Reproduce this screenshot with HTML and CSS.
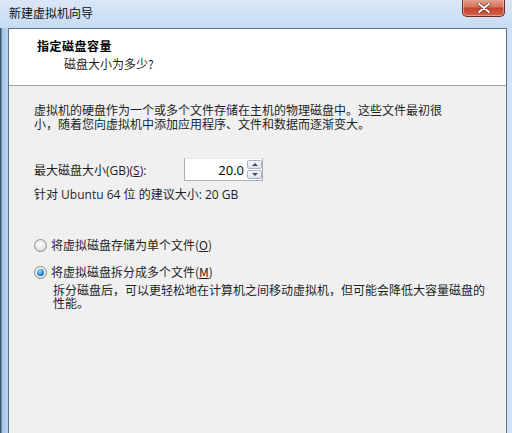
FILE: index.html
```html
<!DOCTYPE html>
<html lang="zh-CN">
<head>
    <meta charset="UTF-8">
    <meta name="viewport" content="width=device-width, initial-scale=1.0">
    <title>新建虚拟机向导</title>
    <link rel="stylesheet" href="styles.css">
</head>
<body>
    <div class="window">
        <div class="titlebar">
            <span class="title">新建虚拟机向导</span>
            <button class="close" aria-label="关闭">
                <svg width="14" height="10" viewBox="0 0 14 10">
                    <path d="M2 1 L12 9 M12 1 L2 9" stroke="#5a2a22" stroke-width="3.4" stroke-linecap="round"/>
                    <path d="M2 1 L12 9 M12 1 L2 9" stroke="#ffffff" stroke-width="2" stroke-linecap="round"/>
                </svg>
            </button>
        </div>
        <div class="client">
            <div class="header">
                <div class="header-title">指定磁盘容量</div>
                <div class="header-sub">磁盘大小为多少?</div>
            </div>
            <div class="content">
                <p class="intro">虚拟机的硬盘作为一个或多个文件存储在主机的物理磁盘中。这些文件最初很<br>小，随着您向虚拟机中添加应用程序、文件和数据而逐渐变大。</p>

                <div class="size-row">
                    <label class="size-label">最大磁盘大小(GB)(<u>S</u>):</label>
                    <div class="spin">
                        <input class="spin-value" type="text" value="20.0">
                        <div class="spin-buttons">
                            <span class="spin-btn"><i class="arrow up"></i></span>
                            <span class="spin-btn"><i class="arrow down"></i></span>
                        </div>
                    </div>
                </div>
                <p class="hint">针对 Ubuntu 64 位 的建议大小: 20 GB</p>

                <div class="options">
                    <label class="radio"><span class="radio-dot"></span>将虚拟磁盘存储为单个文件(<u>O</u>)</label>
                    <label class="radio"><span class="radio-dot checked"></span>将虚拟磁盘拆分成多个文件(<u>M</u>)</label>
                    <p class="radio-note">拆分磁盘后，可以更轻松地在计算机之间移动虚拟机，但可能会降低大容量磁盘的<br>性能。</p>
                </div>
            </div>
        </div>
    </div>
</body>
</html>
```

FILE: styles.css
```css
* {
    box-sizing: border-box;
}
body {
    margin: 0;
    font-family: "Open Sans", "Noto Sans CJK SC", sans-serif;
    font-size: 12px;
    color: #1e1e1e;
    background-color: #c4d9f1;
}
.window {
    width: 512px;
    height: 433px;
    overflow: hidden;
    display: flex;
    flex-direction: column;
    padding: 0 5px 0 8px;
    background: linear-gradient(to right, #3f5468 0, #3f5468 1px, #a4c4ea 2px, #b7d1f0 8px, #c9ddf4 60%, #cfe2f7 100%);
}
.titlebar {
    height: 28px;
    display: flex;
    justify-content: space-between;
    align-items: flex-start;
    background: linear-gradient(to bottom, #d9e7f7, #c6dbf3);
    margin: 0 -5px 0 -8px;
    padding: 0 7px 0 9px;
}
.title {
    margin-top: 5px;
    line-height: 16px;
    color: #101010;
    font-family: "Noto Sans CJK SC", sans-serif;
}
.close {
    width: 43px;
    height: 18px;
    margin-top: -1px;
    padding: 0;
    border: 1px solid #6d2c24;
    border-top: none;
    border-radius: 0 0 5px 5px;
    background: linear-gradient(to bottom, #e6a796 0, #d6745f 45%, #c4442c 55%, #d2634a 100%);
    box-shadow: inset 0 0 0 1px rgba(255, 210, 200, 0.5);
    display: flex;
    align-items: center;
    justify-content: center;
}
.client {
    flex: 1;
    border: 1px solid #5f7285;
    border-bottom: none;
    background-color: #f0f0f0;
}
.header {
    height: 57px;
    background-color: #ffffff;
    border-bottom: 1px solid #a0a0a0;
    padding: 8px 0 0 28px;
    font-family: "Noto Sans CJK SC", sans-serif;
}
.header-title {
    font-weight: bold;
    font-size: 12px;
    line-height: 18px;
    color: #000;
    letter-spacing: 0.5px;
}
.header-sub {
    padding-left: 27px;
    line-height: 17px;
}
.content {
    padding: 17px 20px 0 25px;
}
p {
    margin: 0;
}
.intro {
    line-height: 14px;
    font-family: "Noto Sans CJK SC", sans-serif;
}
.size-row {
    display: flex;
    align-items: center;
    margin-top: 27px;
}
.size-label {
    width: 150px;
}
.spin {
    width: 79px;
    height: 23px;
    display: flex;
    border: 1px solid #abadb3;
    border-top-color: #e3e9ef;
    background-color: #fff;
    padding: 1px;
}
.spin-value {
    width: 60px;
    border: none;
    font: inherit;
    font-size: 13px;
    text-align: right;
    padding: 0 2px 0 0;
    color: #000;
    background: transparent;
    outline: none;
}
.spin-buttons {
    display: flex;
    flex-direction: column;
    gap: 1px;
    margin-left: 1px;
}
.spin-btn {
    width: 15px;
    height: 9px;
    border: 1px solid #a9b4c0;
    border-radius: 2px;
    background: linear-gradient(to bottom, #f6f8fa, #dde3ea);
    display: flex;
    align-items: center;
    justify-content: center;
}
.arrow {
    width: 0;
    height: 0;
    border-left: 3px solid transparent;
    border-right: 3px solid transparent;
}
.arrow.up {
    border-bottom: 3px solid #3b4a5c;
}
.arrow.down {
    border-top: 3px solid #3b4a5c;
}
.hint {
    margin-top: 6px;
    line-height: 16px;
}
.options {
    margin-top: 34px;
}
.radio {
    display: flex;
    align-items: center;
    line-height: 16px;
    margin-bottom: 11px;
    font-family: "Noto Sans CJK SC", sans-serif;
}
.radio-dot {
    width: 13px;
    height: 13px;
    border-radius: 50%;
    border: 1px solid #8e8f8f;
    background: radial-gradient(circle at 45% 40%, #ffffff 0, #e8e8e8 50%, #cfcfcf 100%);
    margin-right: 4px;
    display: flex;
    align-items: center;
    justify-content: center;
}
.radio-dot.checked::after {
    content: "";
    width: 7px;
    height: 7px;
    border-radius: 50%;
    background: radial-gradient(circle at 40% 35%, #9fe0fb 0, #2d8ecf 50%, #0c4f88 100%);
}
.radio-note {
    margin: -8px 0 0 19px;
    line-height: 13px;
    font-family: "Noto Sans CJK SC", sans-serif;
}
```
